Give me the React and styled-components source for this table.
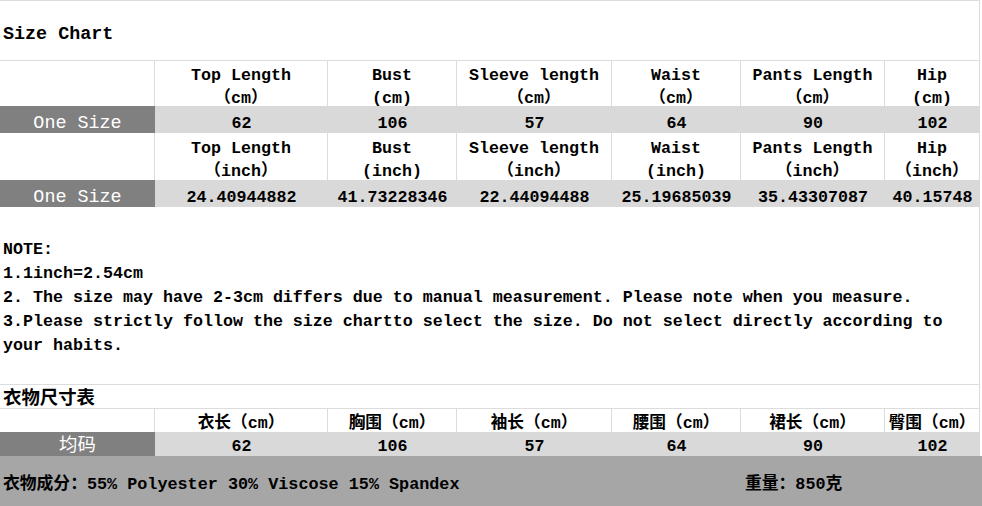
import React from "react";
import styled, { createGlobalStyle } from "styled-components";

const GlobalStyle = createGlobalStyle`
  body {
    margin: 0;
    background: #ffffff;
    font-family: "Liberation Mono", "Noto Sans CJK SC", monospace;
    color: #000000;
  }
`;

const LINE = "#dcdcdc";
const COLS = "155px 173px 129px 155px 129px 144px 95px";

const Page = styled.div`
  width: 982px;
  height: 506px;
  overflow: hidden;
  display: flex;
  flex-direction: column;
`;

const Sheet = styled.div`
  width: 979px;
  border-top: 1px solid ${LINE};
  border-right: 1px solid ${LINE};
  display: flex;
  flex-direction: column;
`;

const TitleRow = styled.div`
  height: 60px;
  box-sizing: border-box;
  padding: 8px 0 0 3px;
  display: flex;
  align-items: center;
  border-bottom: 1px solid ${LINE};
  font-size: 18.4px;
  font-weight: bold;
`;

const Grid = styled.div`
  display: grid;
  grid-template-columns: ${COLS};
  width: 980px;
`;

const HeadCell = styled.div`
  height: ${(p) => p.$h}px;
  box-sizing: border-box;
  padding-top: ${(p) => p.$pad || 0}px;
  border-right: 1px solid ${LINE};
  text-align: center;
  font-size: 16.67px;
  font-weight: bold;
  line-height: ${(p) => p.$lh || 23}px;
  white-space: pre-line;
  overflow: visible;
`;

const SizeCell = styled.div`
  height: ${(p) => p.$h || 27}px;
  line-height: ${(p) => p.$lh || 36}px;
  background: #808080;
  color: #ffffff;
  text-align: center;
  font-size: 18.4px;
  overflow: visible;
`;

const ValueCell = styled.div`
  height: ${(p) => p.$h || 27}px;
  line-height: ${(p) => p.$lh || 36}px;
  background: #d9d9d9;
  text-align: center;
  font-size: 16.67px;
  font-weight: bold;
  overflow: visible;
`;

const Notes = styled.div`
  height: 177px;
  box-sizing: border-box;
  padding: 31px 0 0 3px;
  font-size: 16.67px;
  font-weight: bold;
  line-height: 24px;
`;

const NoteLine = styled.div`
  white-space: pre;
`;

const CnTitle = styled.div`
  height: 25px;
  box-sizing: border-box;
  border-top: 1px solid ${LINE};
  border-bottom: 1px solid ${LINE};
  padding: 3px 0 0 3px;
  line-height: 23px;
  font-size: 18.4px;
  font-weight: bold;
`;

const Footer = styled.div`
  display: grid;
  grid-template-columns: 741px 1fr;
  height: 50px;
  align-items: center;
  background: #a6a6a6;
  font-size: 16.8px;
  font-weight: bold;
  white-space: nowrap;
`;

const FooterText = styled.div`
  padding-left: ${(p) => p.$pad}px;
  padding-top: 1px;
`;

const cmHeads = [
  "Top Length\n（cm）",
  "Bust\n(cm)",
  "Sleeve length\n（cm）",
  "Waist\n（cm）",
  "Pants Length\n（cm）",
  "Hip\n(cm)",
];

const inchHeads = [
  "Top Length\n（inch）",
  "Bust\n(inch)",
  "Sleeve length\n（inch）",
  "Waist\n(inch)",
  "Pants Length\n（inch）",
  "Hip\n（inch）",
];

const cmValues = ["62", "106", "57", "64", "90", "102"];
const inchValues = [
  "24.40944882",
  "41.73228346",
  "22.44094488",
  "25.19685039",
  "35.43307087",
  "40.15748",
];

const cnHeads = ["衣长（cm）", "胸围（cm）", "袖长（cm）", "腰围（cm）", "裙长（cm）", "臀围（cm）"];

function HeadRow({ heads, h, pad, lh }) {
  return (
    <>
      <HeadCell $h={h} $pad={pad} $lh={lh} />
      {heads.map((t) => (
        <HeadCell key={t} $h={h} $pad={pad} $lh={lh}>
          {t}
        </HeadCell>
      ))}
    </>
  );
}

function ValueRow({ label, values, h, lh }) {
  return (
    <>
      <SizeCell $h={h} $lh={lh}>{label}</SizeCell>
      {values.map((v, i) => (
        <ValueCell key={i} $h={h} $lh={lh}>
          {v}
        </ValueCell>
      ))}
    </>
  );
}

export default function App() {
  return (
    <Page>
      <GlobalStyle />
      <Sheet>
        <TitleRow>Size Chart</TitleRow>
        <Grid>
          <HeadRow heads={cmHeads} h={45} pad={3} />
          <ValueRow label="One Size" values={cmValues} />
          <HeadRow heads={inchHeads} h={47} pad={4} />
          <ValueRow label="One Size" values={inchValues} />
        </Grid>
        <Notes>
          <NoteLine>NOTE:</NoteLine>
          <NoteLine>1.1inch=2.54cm</NoteLine>
          <NoteLine>
            2. The size may have 2-3cm differs due to manual measurement. Please note when you measure.
          </NoteLine>
          <NoteLine>
            3.Please strictly follow the size chartto select the size. Do not select directly according to
          </NoteLine>
          <NoteLine>your habits.</NoteLine>
        </Notes>
        <CnTitle>衣物尺寸表</CnTitle>
        <Grid>
          <HeadRow heads={cnHeads} h={23} lh={24} pad={3} />
          <ValueRow label="均码" values={cmValues} h={24} lh={29} />
        </Grid>
      </Sheet>
      <Footer>
        <FooterText $pad={3}>衣物成分：55% Polyester 30% Viscose 15% Spandex</FooterText>
        <FooterText $pad={4}>重量：850克</FooterText>
      </Footer>
    </Page>
  );
}
